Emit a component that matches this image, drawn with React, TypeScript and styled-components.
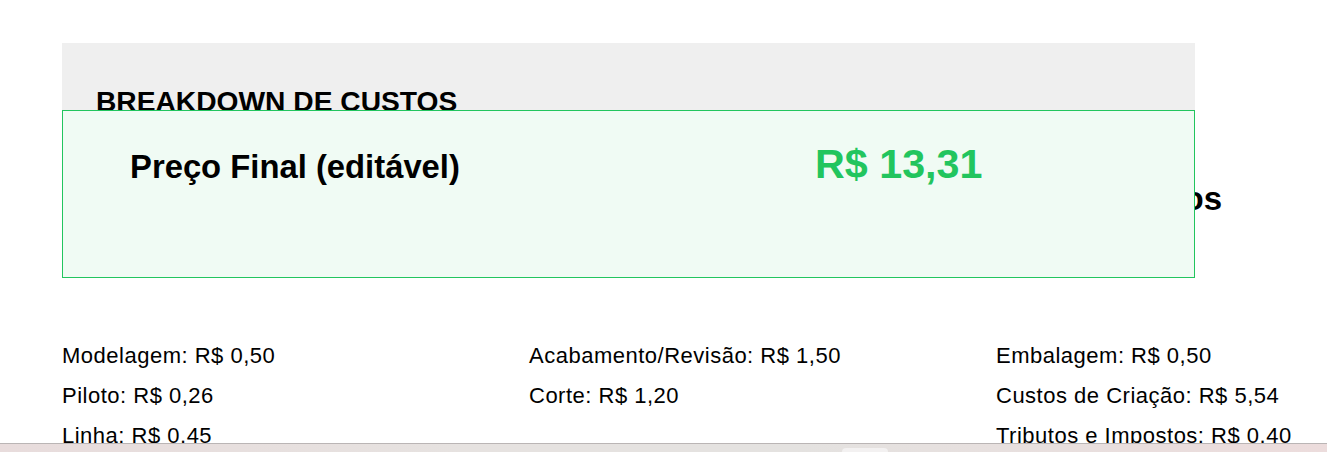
import React from "react";
import styled, { createGlobalStyle } from "styled-components";

const GlobalStyle = createGlobalStyle`
  html, body {
    margin: 0;
    padding: 0;
    background: #ffffff;
    overflow: hidden;
  }
  body {
    font-family: "Liberation Sans", Arial, sans-serif;
    color: #000000;
  }
`;

const Page = styled.div`
  padding: 43px 0 0 62px;
`;

const Panel = styled.section`
  position: relative;
  width: 1133px;
  box-sizing: border-box;
  background: #efefef;
  padding: 42px 0 59px 34px;
`;

const PanelTitle = styled.h2`
  margin: 0;
  font-size: 28.2px;
  line-height: 32px;
  font-weight: 700;
  text-transform: uppercase;
`;

const SubRow = styled.div`
  display: flex;
  justify-content: flex-end;
  margin-top: 63px;
  margin-right: -27px;
`;

const SubTitle = styled.h3`
  margin: 0;
  font-size: 33px;
  line-height: 38px;
  font-weight: 700;
  white-space: nowrap;
`;

const PriceBox = styled.div`
  position: absolute;
  left: 0;
  top: 67px;
  width: 1133px;
  height: 168px;
  box-sizing: border-box;
  border: 1px solid #22c55e;
  background: #f0fbf4;
  padding: 30px 0 0 67px;
  display: grid;
  grid-template-columns: 685px auto;
  align-items: baseline;
  align-content: start;
`;

const PriceLabel = styled.span`
  font-size: 32.8px;
  font-weight: 700;
  line-height: normal;
`;

const PriceValue = styled.span`
  font-size: 41.25px;
  font-weight: 700;
  line-height: normal;
  color: #22c55e;
`;

const CostGrid = styled.div`
  display: grid;
  grid-template-columns: 467px 467px 1fr;
  margin-top: 59px;
`;

const CostColumn = styled.ul`
  list-style: none;
  margin: 0;
  padding: 0;
  display: flex;
  flex-direction: column;
`;

const CostItem = styled.li`
  font-size: 22px;
  line-height: 40px;
  letter-spacing: 0.5px;
  white-space: nowrap;
`;

const BottomBar = styled.div`
  position: fixed;
  left: 0;
  right: 0;
  bottom: 0;
  height: 8px;
  border-top: 1px solid #bab5b5;
  background: linear-gradient(
    90deg,
    #e8dcdc 0%,
    #e6e2e0 35%,
    #e4e2e0 60%,
    #ecdcdc 100%
  );
`;

const BarTab = styled.div`
  position: absolute;
  left: 842px;
  top: 4px;
  width: 46px;
  height: 6px;
  border-radius: 4px 4px 0 0;
  background: #f3f1f1;
`;

const columns: string[][] = [
  ["Modelagem: R$ 0,50", "Piloto: R$ 0,26", "Linha: R$ 0.45"],
  ["Acabamento/Revisão: R$ 1,50", "Corte: R$ 1,20"],
  [
    "Embalagem: R$ 0,50",
    "Custos de Criação: R$ 5,54",
    "Tributos e Impostos: R$ 0.40",
  ],
];

export default function App() {
  return (
    <>
      <GlobalStyle />
      <Page>
        <Panel>
          <PanelTitle>Breakdown de Custos</PanelTitle>
          <SubRow>
            <SubTitle>Custos Diretos</SubTitle>
          </SubRow>
          <PriceBox>
            <PriceLabel>Preço Final (editável)</PriceLabel>
            <PriceValue>R$ 13,31</PriceValue>
          </PriceBox>
        </Panel>
        <CostGrid>
          {columns.map((col, i) => (
            <CostColumn key={i}>
              {col.map((item) => (
                <CostItem key={item}>{item}</CostItem>
              ))}
            </CostColumn>
          ))}
        </CostGrid>
      </Page>
      <BottomBar>
        <BarTab />
      </BottomBar>
    </>
  );
}
